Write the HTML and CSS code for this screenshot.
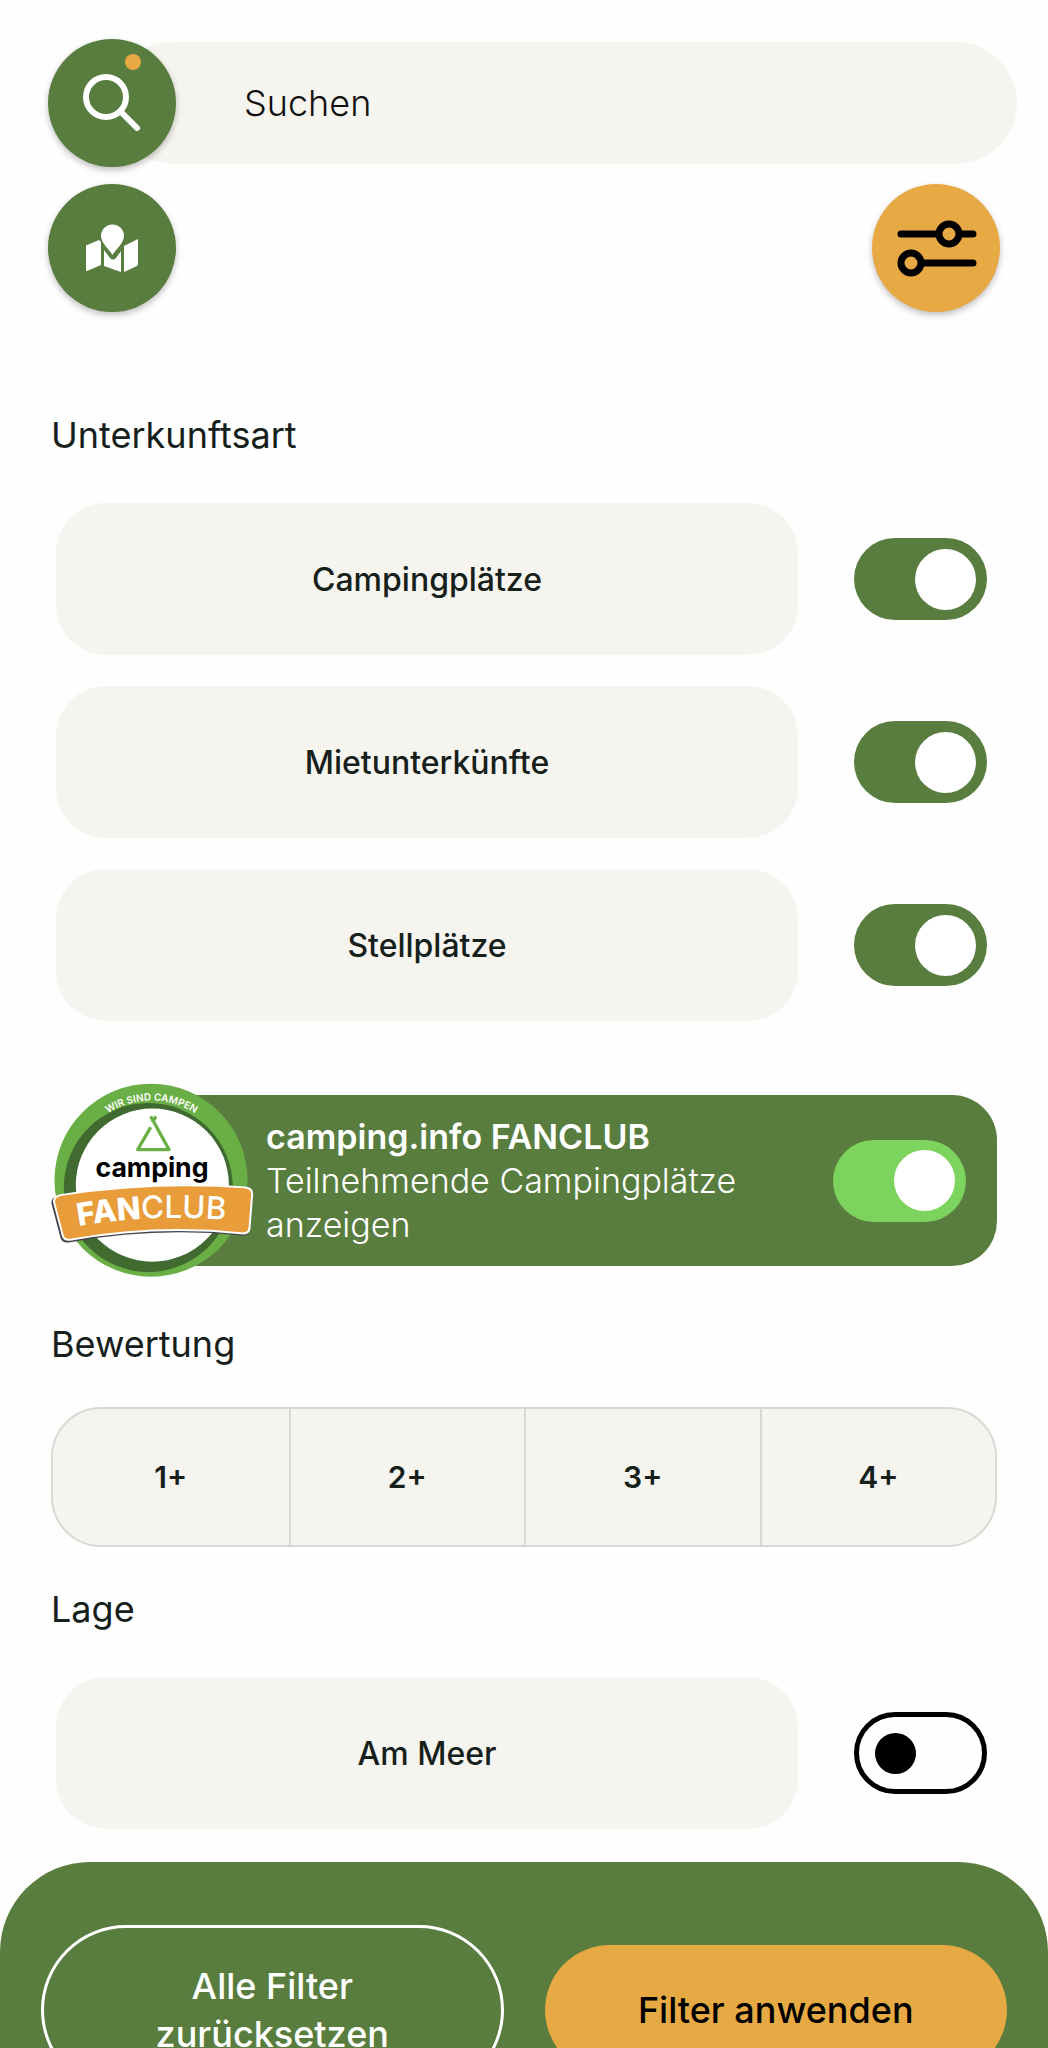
FILE: index.html
```html
<!DOCTYPE html>
<html lang="de">
<head>
<meta charset="utf-8">
<meta name="viewport" content="width=device-width, initial-scale=1">
<title>Filter</title>
<link rel="stylesheet" href="styles.css">
</head>
<body>
<div class="page">
  <header class="top">
    <form class="search">
      <button class="round" type="button" aria-label="Suche starten">
        <svg class="icon" viewBox="0 0 128 128" aria-hidden="true">
          <circle cx="85" cy="23" r="8" fill="#e7a944"/>
          <circle cx="58" cy="58" r="20" fill="none" stroke="#fff" stroke-width="6"/>
          <path d="M73 73 89 89" stroke="#fff" stroke-width="6" stroke-linecap="round"/>
        </svg>
      </button>
      <input class="search-input" type="text" placeholder="Suchen" aria-label="Suchen">
    </form>
    <div class="tools">
      <button class="round" type="button" aria-label="Karte">
        <svg class="icon" viewBox="0 0 128 128" fill="#fff" aria-hidden="true">
          <path d="M38 62q0-1 1-1l12-5 2 2v23l-14 6q-1 0-1-1z"/>
          <path d="M56 66l6 8q3 3 6 0l5-7v21l-17-6z"/>
          <path d="M76 62l14-7v25q0 1-1 2l-13 6z"/>
          <path d="M64.500 71C61 65 53 59 53 52a11.500 11.500 0 0 1 23 0c0 7-8 13-11.500 19z"/>
        </svg>
      </button>
      <button class="round accent" type="button" aria-label="Filter">
        <svg class="icon" viewBox="0 0 128 128" fill="none" stroke="#000" stroke-width="7" stroke-linecap="round" aria-hidden="true">
          <path d="M29 50h36M90 50h11M53 79h48"/>
          <circle cx="77" cy="50" r="10"/>
          <circle cx="39" cy="79" r="10"/>
        </svg>
      </button>
    </div>
  </header>

  <main class="filters">
    <section>
      <h2>Unterkunftsart</h2>
      <div class="options">
        <div class="option"><label class="pill" for="camp">Campingplätze</label><input class="toggle" id="camp" type="checkbox" checked></div>
        <div class="option"><label class="pill" for="rent">Mietunterkünfte</label><input class="toggle" id="rent" type="checkbox" checked></div>
        <div class="option"><label class="pill" for="pitch">Stellplätze</label><input class="toggle" id="pitch" type="checkbox" checked></div>
      </div>
    </section>

    <section class="fanclub">
      <svg class="badge" viewBox="60 60 615 595" aria-hidden="true">
        <defs>
          <path id="arc" d="M123 363a241 241 0 0 1 482 0"/>
          <path id="ribbon" d="M145 499Q370 460 620 483"/>
        </defs>
        <circle cx="363" cy="361" r="290" fill="#6aaf45"/>
        <circle cx="355" cy="383" r="254" fill="#416a31"/>
        <circle cx="367" cy="376" r="230" fill="#fff"/>
        <text class="badge-motto"><textPath href="#arc" startOffset="50%">WIR SIND CAMPEN</textPath></text>
        <path d="M362 202 323 269H417L362 169M378 169 367 187" fill="none" stroke="#6aaf45" stroke-width="10" stroke-linejoin="round"/>
        <text class="badge-name" x="366" y="351">camping</text>
        <path d="M86 407Q365 360 646 382Q670 384 669 408L660 512Q658 527 642 528Q380 500 116 548Q96 551 91 534L64 432Q61 412 86 407z" fill="#46454f"/>
        <path d="M90 403Q365 360 646 380Q671 382 670 404L662 506Q660 523 642 524Q380 496 120 543Q100 546 95 528L69 428Q66 408 90 403z" fill="#fff"/>
        <path d="M94 408Q365 366 644 385Q665 387 664 404L656 504Q654 518 640 518Q380 491 120 537Q104 539 100 525L75 429Q72 412 94 408z" fill="#e89c3a"/>
        <text class="badge-club"><textPath href="#ribbon" startOffset="0"><tspan class="badge-fan">FAN</tspan>CLUB</textPath></text>
      </svg>
      <label class="fan-text" for="fan"><strong>camping.info FANCLUB</strong><span>Teilnehmende Campingplätze anzeigen</span></label>
      <input class="toggle bright" id="fan" type="checkbox" checked>
    </section>

    <section class="rating">
      <h2 id="rating-title">Bewertung</h2>
      <div class="segments" role="radiogroup" aria-labelledby="rating-title">
        <label><input type="radio" name="rating">1+</label>
        <label><input type="radio" name="rating">2+</label>
        <label><input type="radio" name="rating">3+</label>
        <label><input type="radio" name="rating">4+</label>
      </div>
    </section>

    <section class="location">
      <h2>Lage</h2>
      <div class="options">
        <div class="option"><label class="pill" for="sea">Am Meer</label><input class="toggle" id="sea" type="checkbox"></div>
      </div>
    </section>
  </main>

  <footer class="actions">
    <button class="reset" type="button">Alle Filter zurücksetzen</button>
    <button class="apply" type="button">Filter anwenden</button>
  </footer>
</div>
</body>
</html>
```
FILE: styles.css
```css
:root {
  --green: #587d3e;
  --orange: #e7a944;
  --sand: #f5f4ef;
  --ink: #16201a;
}

* { box-sizing: border-box; }

body {
  margin: 0;
  background: #fefefe;
  color: var(--ink);
  font-family: Inter, "Liberation Sans", sans-serif;
}

button, input { font: inherit; }
button { cursor: pointer; border: 0; }

.page {
  height: 100vh;
  overflow-y: auto;
  scrollbar-width: none;
}

.top { padding: 39px 31px 0 48px; }

.search {
  display: flex;
  align-items: center;
}

.round {
  flex: none;
  width: 128px;
  height: 128px;
  padding: 0;
  border-radius: 50%;
  background: var(--green);
  box-shadow: 0 3px 6px rgba(0, 0, 0, .25);
  z-index: 1;
}

.accent { background: var(--orange); }
.icon { display: block; width: 100%; height: 100%; }

.search-input {
  flex: 1;
  min-width: 0;
  height: 122px;
  margin-left: -64px;
  padding: 0 48px 0 132px;
  border: 0;
  border-radius: 61px;
  background: var(--sand);
  font-size: 36px;
  font-weight: 300;
}

.search-input::placeholder { color: #111; opacity: 1; }

.tools {
  display: flex;
  justify-content: space-between;
  padding: 17px 17px 0 0;
}

.filters { padding: 0 51px; }

h2 {
  margin: 0;
  padding-top: 99px;
  font-size: 36px;
  line-height: 48px;
  font-weight: 400;
}

.options {
  display: grid;
  gap: 31px;
  padding: 44px 10px 0 5px;
}

.option {
  display: flex;
  align-items: center;
  gap: 56px;
}

.pill {
  flex: 1;
  display: flex;
  align-items: center;
  justify-content: center;
  height: 152px;
  border-radius: 50px;
  background: var(--sand);
  font-size: 32px;
  font-weight: 500;
}

.toggle {
  appearance: none;
  flex: none;
  display: flex;
  align-items: center;
  width: 133px;
  height: 82px;
  margin: 0;
  padding: 0 16px;
  border: 5px solid #000;
  border-radius: 41px;
}

.toggle::before {
  content: "";
  width: 41px;
  height: 41px;
  border-radius: 50%;
  background: #000;
}

.toggle:checked {
  justify-content: flex-end;
  padding: 0 11px;
  border: 0;
  background: var(--green);
}

.toggle:checked::before {
  width: 61px;
  height: 61px;
  background: #fff;
}

.toggle.bright { background: #7cd45e; }

.fanclub {
  position: relative;
  display: flex;
  align-items: center;
  justify-content: space-between;
  gap: 40px;
  min-height: 171px;
  margin: 74px 0 0 60px;
  padding: 0 31px 0 155px;
  border-radius: 45px;
  background: var(--green);
  color: #fff;
}

.badge {
  position: absolute;
  left: -61px;
  top: -15px;
  width: 205px;
  height: 198px;
}

.badge-motto {
  fill: #fff;
  font-size: 30px;
  font-weight: 600;
  text-anchor: middle;
}

.badge-name {
  fill: #000;
  font-size: 80px;
  font-weight: 700;
  text-anchor: middle;
}

.badge-club { fill: #fff; font-size: 94px; font-weight: 500; }
.badge-fan { font-weight: 800; }

.fan-text {
  flex: 1;
  display: grid;
  font-size: 34px;
  line-height: 44px;
}

.fan-text strong { font-weight: 600; }
.fan-text span { font-weight: 300; }

.rating h2 { padding-top: 54px; }

.segments {
  display: grid;
  grid-template-columns: repeat(4, 1fr);
  margin-top: 39px;
  overflow: hidden;
  border: 2px solid #d9d9d3;
  border-radius: 50px;
  background: var(--sand);
}

.segments label {
  display: grid;
  place-items: center;
  height: 136px;
  font-size: 30px;
  font-weight: 600;
}

.segments label + label { border-left: 2px solid #d9d9d3; }
.segments input { position: absolute; appearance: none; margin: 0; }

.location h2 { padding-top: 38px; }

.actions {
  display: grid;
  grid-template-columns: 1fr 1fr;
  align-items: center;
  gap: 41px;
  margin-top: 33px;
  padding: 63px 41px;
  border-radius: 90px 90px 0 0;
  background: var(--green);
}

.actions button {
  border-radius: 85px;
  font-size: 36px;
  line-height: 48px;
  font-weight: 500;
}

.actions .reset {
  height: 170px;
  padding: 0 80px;
  border: 3px solid #fff;
  background: transparent;
  color: #fff;
}

.actions .apply {
  height: 130px;
  background: var(--orange);
  color: #000;
}
```
